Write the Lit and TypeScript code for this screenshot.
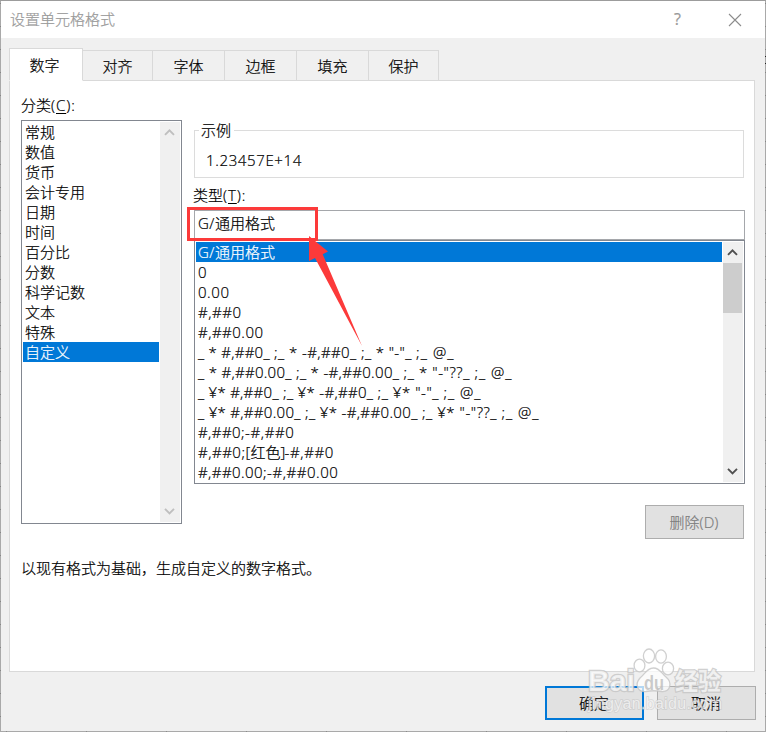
import { LitElement, html, css, svg } from "lit";
import { customElement, property } from "lit/decorators.js";
import { classMap } from "lit/directives/class-map.js";

type Segment = [text: string, width: number];

const TABS = ["数字", "对齐", "字体", "边框", "填充", "保护"];

const CATEGORIES = [
  "常规", "数值", "货币", "会计专用", "日期", "时间",
  "百分比", "分数", "科学记数", "文本", "特殊", "自定义",
];

const FORMATS: Segment[][] = [
  [["G/", 17], ["通用格式", 60]],
  [["0", 9]],
  [["0.00", 31.5]],
  [["#,##0", 43.5]],
  [["#,##0.00", 65.5]],
  [["_ * #,##0_ ", 76], [";_ * -#,##0_ ", 87], [';_ * "-"_ ', 55], [";_ @_", 38.5]],
  [["_ * #,##0.00_ ", 98], [";_ * -#,##0.00_ ", 107.5], [';_ * "-"??_ ', 71], [";_ @_", 38]],
  [["_ ¥* #,##0_ ", 85], [";_ ¥* -#,##0_ ", 94.5], [';_ ¥* "-"_ ', 66], [";_ @_", 38]],
  [["_ ¥* #,##0.00_ ", 107], [";_ ¥* -#,##0.00_ ", 117], [';_ ¥* "-"??_ ', 79.5], [";_ @_", 38]],
  [["#,##0;", 47], ["-#,##0", 49.5]],
  [["#,##0;", 47.5], ["[", 5], ["红色", 30], ["]", 4], ["-#,##0", 49.5]],
  [["#,##0.00;", 69], ["-#,##0.00", 71.5]],
];

/** A run of text whose tracking is adjusted so that it fills a given width. */
@customElement("fit-text")
class FitText extends LitElement {
  @property() text = "";
  @property({ type: Number }) width = 0;

  static styles = css`
    :host { display: inline-block; white-space: pre; }
    .run { display: inline-block; white-space: pre; }
  `;

  firstUpdated() {
    const run = this.renderRoot.querySelector(".run") as HTMLElement;
    const natural = run.getBoundingClientRect().width;
    const gap = (this.width - natural) / this.text.length;
    run.style.letterSpacing = `${gap.toFixed(3)}px`;
  }

  render() {
    return html`<span class="run">${this.text}</span>`;
  }
}

@customElement("scroll-bar")
class ScrollBar extends LitElement {
  @property({ type: Boolean }) disabled = false;

  static styles = css`
    :host { display: flex; flex-direction: column; width: 20px; background: #f0f0f0; }
    .arrow { width: 20px; height: 21px; color: #505050; display: block; }
    .thumb { width: 19px; height: 50px; background: #cdcdcd; }
    .space { flex: 1; }
    .off { color: #bfbfbf; }
  `;

  render() {
    const arrow = (d: string) => html`
      <svg class=${classMap({ arrow: true, off: this.disabled })} viewBox="0 0 20 21">
        ${svg`<path d=${d} fill="none" stroke="currentColor" stroke-width="1.9" />`}
      </svg>`;
    return html`
      ${arrow("M5 12.8 L9.5 8.3 L14 12.8")}
      ${this.disabled ? "" : html`<div class="thumb"></div>`}
      <div class="space"></div>
      ${arrow("M5 7.8 L9.5 12.3 L14 7.8")}
    `;
  }
}

@customElement("app-root")
class AppRoot extends LitElement {
  static styles = css`
    :host {
      display: block;
      position: relative;
      width: 766px;
      height: 732px;
      overflow: hidden;
      box-sizing: border-box;
      padding: 1px;
      font: 300 15px/20px "Open Sans", "Noto Sans CJK SC", sans-serif;
      -webkit-text-stroke: 0.22px currentColor;
      color: #000;
      background:
        linear-gradient(#9c9c9c, #9c9c9c) 0 0 / 100% 1px no-repeat,
        repeating-linear-gradient(90deg, #a9a9a9 0 6px, #8c8c8c 6px 7px, #a9a9a9 7px 80px) 0 100% / 100% 1px no-repeat,
        repeating-linear-gradient(#a9a9a9 0 3px, #868686 3px 4px, #a9a9a9 4px 23px);
    }
    * { box-sizing: border-box; }
    .cjk { font-family: "Noto Sans CJK SC", sans-serif; }
    .dialog { display: flex; flex-direction: column; height: 730px; background: #f0f0f0; }
    .titlebar {
      display: flex; align-items: center; height: 37px; background: #fff;
      padding: 0 23px 0 9px; color: #999;
    }
    .title { flex: 1; padding-bottom: 2px; }
    .help { width: 9px; font-size: 16px; font-weight: 400; margin-right: 45px; padding-bottom: 1px; }
    .close { width: 14px; height: 14px; display: block; }
    .tabs { display: flex; align-items: flex-end; height: 43px; padding: 10px 0 0 8px; position: relative; z-index: 1; }
    .tab {
      height: 31px; width: 72px; border: 1px solid #d9d9d9; border-left: 0;
      display: flex; align-items: center; justify-content: center; padding-top: 1px;
    }
    .tab.edge { width: 70px; }
    .tab.active {
      height: 33px; width: 74px; background: #fff; border-left: 1px solid #d9d9d9;
      border-bottom-color: #fff; padding: 0 3px 0 0;
    }
    .panel {
      margin: -1px 10px 0 8px; height: 592px; border: 1px solid #d9d9d9; background: #fff;
      padding: 14px 9px 0 11px; display: flex; flex-direction: column;
    }
    .columns { display: flex; gap: 12px; height: 410px; }
    .left { width: 161px; }
    .left .label { height: 25px; }
    .label, .type-label { letter-spacing: .9px; }
    .name { letter-spacing: 0; }
    .right { width: 551px; display: flex; flex-direction: column; }
    .underline { text-decoration: underline; text-underline-offset: 2px; text-decoration-thickness: 1px; }
    .box { display: flex; background: #fff; border: 1px solid #828790; }
    .categories { width: 161px; height: 404px; padding: 1px; }
    .options { flex: 1; min-width: 0; margin-right: 1px; }
    .option { height: 20px; padding-left: 2px; white-space: pre; display: flex; line-height: 20px; }
    .option.selected { background: #0078d7; color: #fff; }
    .sample {
      margin: 35px 1px 0 0; height: 48px; border: 1px solid #dcdcdc; padding: 0 0 0 4px;
    }
    .legend { display: block; width: 35px; height: 20px; margin-top: -11px; padding-left: 2px; background: #fff; }
    .value { padding: 10px 0 0 7px; height: 31px; }
    .type-label { margin: 7px 0 5px -1px; height: 20px; }
    .input { height: 30px; border: 1px solid #a5a7ab; padding: 2px 0 0 3px; display: flex; }
    .formats { height: 244px; padding: 1px; }
    .formats scroll-bar { height: 240px; }
    .actions { display: flex; justify-content: flex-end; padding-right: 1px; }
    .button {
      width: 99px; height: 34px; background: #e1e1e1; border: 1px solid #adadad;
      display: flex; align-items: center; justify-content: center; padding-right: 1px;
    }
    .button.disabled { color: #7d7d7d; }
    .button.primary { border: 2px solid #0078d7; }
    .hint { padding-top: 19px; height: 40px; }
    .footer { display: flex; justify-content: flex-end; gap: 13px; padding: 14px 9px 0 0; }
    .overlay { position: absolute; left: 0; top: 0; width: 766px; height: 732px; pointer-events: none; }
    .wm-brand { font: 700 29px "Liberation Sans", sans-serif; }
    .wm-du { font: 700 20px "Liberation Sans", sans-serif; }
    .wm-cn { font: 700 24px "Noto Sans CJK SC", sans-serif; }
    .wm-url { font: 400 16px "Liberation Sans", sans-serif; }
    .edge-marks { position: absolute; left: 765px; top: 56px; width: 1px; height: 8px; border-top: 1px solid #222; border-bottom: 1px solid #222; }
  `;

  private run(parts: Segment[]) {
    return parts.map(([text, width]) => html`<fit-text .text=${text} .width=${width}></fit-text>`);
  }

  private label(name: string, key: string) {
    return html`<span class="name cjk">${name}</span>(<span class="underline">${key}</span>):`;
  }

  private watermark() {
    return svg`
      <g fill="#fff" fill-opacity=".7" stroke="#c4c4c4" stroke-opacity=".8" stroke-width="1.3">
        <ellipse cx="639.5" cy="665.5" rx="5.4" ry="6.3" />
        <ellipse cx="649" cy="656" rx="5.6" ry="7" />
        <ellipse cx="661" cy="656.5" rx="5.4" ry="6.6" />
        <ellipse cx="668" cy="668.5" rx="5.6" ry="6.4" />
        <path d="M653.5 668 C660 668 661 673 666 677 C673 683 670 692 662 691.5 C656 690.5 651 690.5 646 691.5 C638 692.5 634 685 640 678 C646 673 647 668 653.5 668 Z" />
        <g paint-order="stroke" stroke-width="2.4">
          <text class="wm-brand" x="588" y="691" textLength="47" lengthAdjust="spacingAndGlyphs">Bai</text>
          <text class="wm-cn" x="675" y="690" textLength="46" lengthAdjust="spacingAndGlyphs">经验</text>
        </g>
        <text class="wm-du" x="644" y="690" textLength="20" lengthAdjust="spacingAndGlyphs" fill="#b4b4b4" stroke="none">du</text>
      </g>
      <text class="wm-url" x="588" y="709" textLength="134" fill="#fff" fill-opacity=".65"
        stroke="#bcbcbc" stroke-opacity=".5" stroke-width="1.4" paint-order="stroke">jingyan.baidu.com</text>`;
  }

  render() {
    return html`
      <div class="dialog">
        <div class="titlebar">
          <span class="title cjk">设置单元格格式</span>
          <span class="help">?</span>
          <svg class="close" viewBox="0 0 14 14"><path d="M1 1 L13 13 M13 1 L1 13" stroke="#8c8c8c" stroke-width="1.1" /></svg>
        </div>

        <div class="tabs cjk">
          ${TABS.map((name, i) => html`
            <div class=${classMap({ tab: true, active: i === 0, edge: i === 1 || i === 5 })}>${name}</div>`)}
        </div>

        <div class="panel">
          <div class="columns">
            <div class="left">
              <div class="label">${this.label("分类", "C")}</div>
              <div class="box categories">
                <div class="options cjk">
                  ${CATEGORIES.map((name) => html`
                    <div class=${classMap({ option: true, selected: name === "自定义" })}>${name}</div>`)}
                </div>
                <scroll-bar disabled></scroll-bar>
              </div>
            </div>

            <div class="right">
              <div class="sample">
                <span class="legend cjk">示例</span>
                <div class="value">${this.run([["1.23457E+14", 96]])}</div>
              </div>
              <div class="type-label">${this.label("类型", "T")}</div>
              <div class="input">${this.run(FORMATS[0])}</div>
              <div class="box formats">
                <div class="options">
                  ${FORMATS.map((parts, i) => html`
                    <div class=${classMap({ option: true, selected: i === 0 })}>${this.run(parts)}</div>`)}
                </div>
                <scroll-bar></scroll-bar>
              </div>
            </div>
          </div>
          <div class="actions"><div class="button disabled">删除(D)</div></div>
          <div class="hint cjk">以现有格式为基础，生成自定义的数字格式。</div>
        </div>

        <div class="footer cjk">
          <div class="button primary">确定</div>
          <div class="button">取消</div>
        </div>
      </div>

      <div class="edge-marks"></div>
      <svg class="overlay" viewBox="0 0 766 732">
        <rect x="188.5" y="208.5" width="128" height="31" fill="none" stroke="#fc3a3a" stroke-width="3" />
        <path d="M309 236 L328 251.5 L322.7 254.3 L362 346 L315 258 L309 261 Z" fill="#fc3a3a" />
        ${this.watermark()}
      </svg>
    `;
  }
}
